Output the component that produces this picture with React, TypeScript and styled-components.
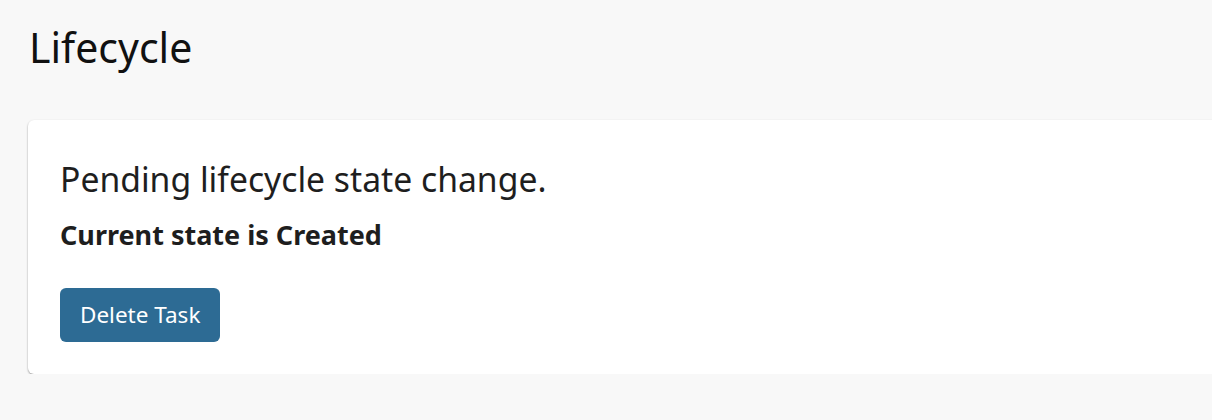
import React from 'react'
import styled, { createGlobalStyle } from 'styled-components'

const GlobalStyle = createGlobalStyle`
  html, body {
    margin: 0;
    padding: 0;
    background: #f8f8f8;
    overflow: hidden;
  }
  body {
    font-family: "Noto Sans", "Open Sans", sans-serif;
    color: #1c1c1c;
  }
`

const Page = styled.div`
  padding: 22px 0 0 28px;
  width: 1240px;
`

const Title = styled.h1`
  margin: 0 0 48px 1px;
  font-size: 41px;
  line-height: 50px;
  font-weight: 400;
  color: #111111;
`

const Card = styled.div`
  background: #ffffff;
  border-radius: 6px;
  box-shadow: 0 1px 2px rgba(0, 0, 0, 0.4);
  padding: 32px;
  display: flex;
  flex-direction: column;
  align-items: flex-start;
`

const Heading = styled.h2`
  margin: 5px 0 0 0;
  font-size: 33.7px;
  line-height: 44px;
  font-weight: 400;
  color: #1e1e1e;
`

const State = styled.p`
  margin: 16px 0 0 0;
  font-size: 27px;
  line-height: 36px;
  font-weight: 700;
  color: #1e1e1e;
`

const Button = styled.button`
  margin-top: 35px;
  padding: 12px 20px;
  border: none;
  border-radius: 6px;
  background: #2d6b94;
  color: #ffffff;
  font-family: "Noto Sans", "Open Sans", sans-serif;
  font-size: 22.5px;
  line-height: 30px;
  cursor: pointer;
`

const App: React.FC = () => {
  return (
    <>
      <GlobalStyle />
      <Page>
        <Title>Lifecycle</Title>
        <Card>
          <Heading>Pending lifecycle state change.</Heading>
          <State>Current state is Created</State>
          <Button>Delete Task</Button>
        </Card>
      </Page>
    </>
  )
}

export default App
